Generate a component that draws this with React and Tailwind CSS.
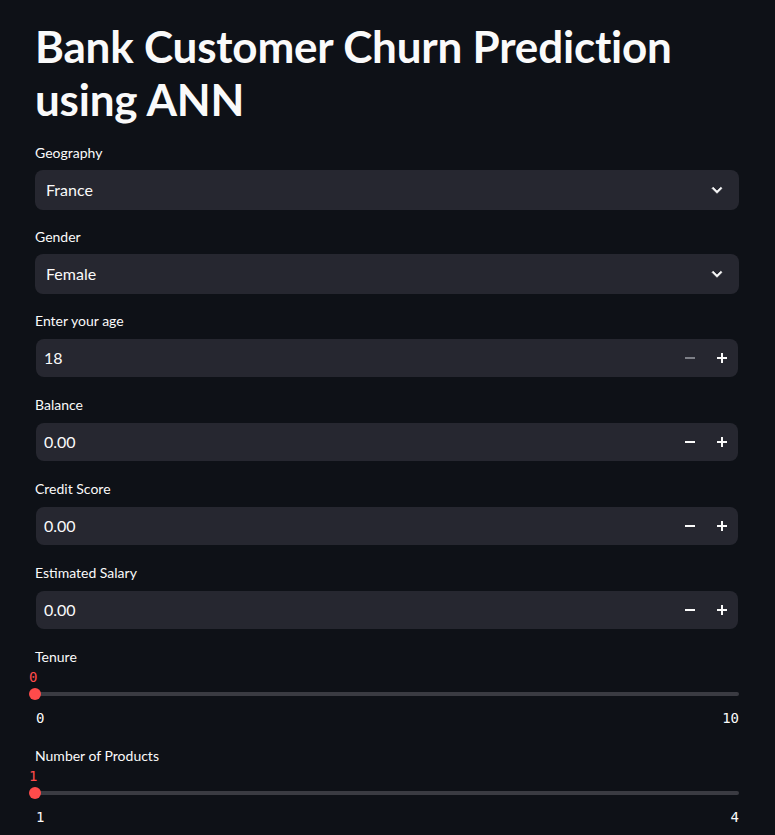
import { useState } from 'react';

function Label({ children }) {
  return <div className="h-7 pt-px leading-5 text-[14px] text-[#fafafa]">{children}</div>;
}

function Chevron() {
  return (
    <svg width="20" height="20" viewBox="0 0 24 24" fill="currentColor">
      <path d="M7.41 8.59L12 13.17l4.59-4.58L18 10l-6 6-6-6 1.41-1.41z" stroke="currentColor" strokeWidth="0.8" />
    </svg>
  );
}

function Select({ label, value }) {
  return (
    <div>
      <Label>{label}</Label>
      <div className="h-10 rounded-lg bg-[#262730] flex items-center justify-between pl-[11px] pr-[12px]">
        <span className="text-[16px]">{value}</span>
        <span className="text-[#fafafa]"><Chevron /></span>
      </div>
    </div>
  );
}

function NumberInput({ label, value, minusDisabled }) {
  return (
    <div>
      <Label>{label}</Label>
      <div className="h-[38px] my-px rounded-lg bg-[#262730] flex items-center mx-px">
        <span className="flex-1 pl-2 text-[16px]">{value}</span>
        <button className={`w-8 h-full flex items-center justify-center ${minusDisabled ? 'text-[#7d7f87]' : 'text-[#fafafa]'}`}>
          <svg width="10" height="10" viewBox="0 0 10 10"><rect x="0" y="4" width="10" height="2" fill="currentColor" /></svg>
        </button>
        <button className="w-8 h-full flex items-center justify-center text-[#fafafa]">
          <svg width="10" height="10" viewBox="0 0 10 10"><rect x="0" y="4" width="10" height="2" fill="currentColor" /><rect x="4" y="0" width="2" height="10" fill="currentColor" /></svg>
        </button>
      </div>
    </div>
  );
}

function Slider({ label, min, max }) {
  return (
    <div>
      <Label>{label}</Label>
      <div className="relative h-[34px]">
        <div className="absolute left-0 -top-[7px] -translate-x-[6px] leading-5 text-[14px] text-[#ff4b4b] font-['DejaVu_Sans_Mono',monospace]">{min}</div>
        <div className="absolute left-0 right-0 top-[18px] h-1 rounded-full bg-[#3a3b42]" />
        <div className="absolute left-[-6px] top-[14px] w-3 h-3 rounded-full bg-[#ff4b4b]" />
      </div>
      <div className="flex justify-between leading-5 text-[14px] font-['DejaVu_Sans_Mono',monospace] text-[#fafafa] pl-[1px] h-5 mb-px">
        <span>{min}</span>
        <span>{max}</span>
      </div>
    </div>
  );
}

export default function App() {
  const [geo] = useState('France');
  return (
    <div className="min-h-screen bg-[#0e1117] text-[#fafafa] font-['Lato',sans-serif]">
      <div className="pl-[35px] pr-[36px] pt-[20px] pb-8">
        <h1 className="text-[44px] font-bold leading-[53px] tracking-[-0.2px] mb-4">Bank Customer Churn Prediction using ANN</h1>
        <div className="flex flex-col gap-4">
          <Select label="Geography" value={geo} />
          <Select label="Gender" value="Female" />
          <NumberInput label="Enter your age" value="18" minusDisabled />
          <NumberInput label="Balance" value="0.00" />
          <NumberInput label="Credit Score" value="0.00" />
          <NumberInput label="Estimated Salary" value="0.00" />
          <Slider label="Tenure" min="0" max="10" />
          <Slider label="Number of Products" min="1" max="4" />
        </div>
      </div>
    </div>
  );
}
